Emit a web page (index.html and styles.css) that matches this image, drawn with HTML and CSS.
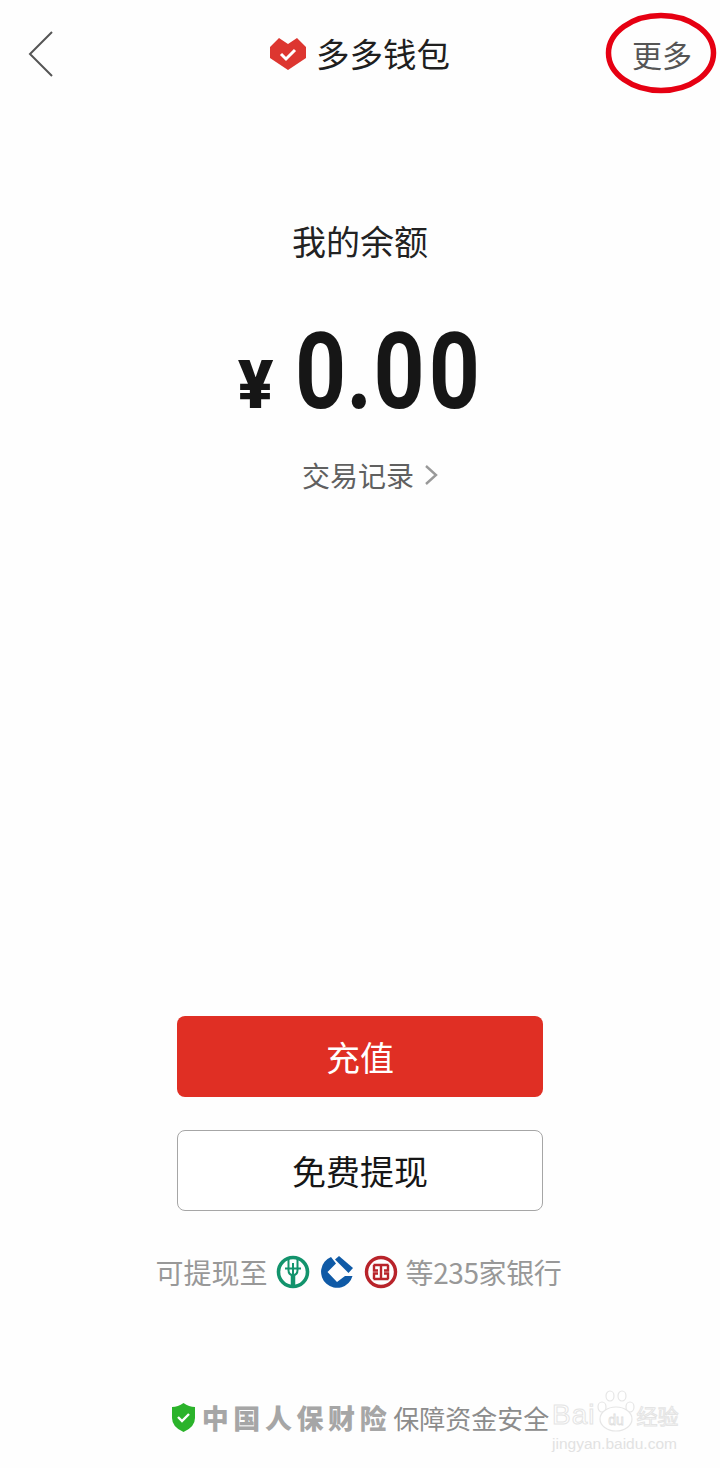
FILE: index.html
```html
<!DOCTYPE html>
<html lang="zh-CN">
<head>
<meta charset="utf-8">
<title>多多钱包</title>
<link rel="stylesheet" href="styles.css">
</head>
<body>
<div class="page">
  <header class="topbar">
    <svg class="back" width="26" height="48" viewBox="0 0 26 48"><path d="M24 2 L2 24 L24 46" fill="none" stroke="#555" stroke-width="2"/></svg>
    <div class="title">
      <svg class="heart" width="37" height="33" viewBox="0 0 37 33"><path d="M0 9 L9 0 L18 6 L27 0 L36 9 V20 L18 32 L0 20 Z" fill="#dd3630"/><path d="M11 16 L16 21 L25 12" fill="none" stroke="#fff" stroke-width="3"/></svg>
      <span class="title-text">多多钱包</span>
    </div>
    <span class="more">更多</span>
    <svg class="mark" width="112" height="82" viewBox="0 0 112 82"><ellipse cx="56" cy="41" rx="52.5" ry="37.5" fill="none" stroke="#e60012" stroke-width="5.500"/></svg>
  </header>

  <main class="balance">
    <div class="label">我的余额</div>
    <div class="amount"><span class="yen">¥</span><span class="num">0<span class="dot">.</span><span class="tail">00</span></span></div>
    <div class="records">
      <span>交易记录</span>
      <svg width="14" height="22" viewBox="0 0 14 22"><path d="M2 2 L12 11 L2 20" fill="none" stroke="#999" stroke-width="2.4"/></svg>
    </div>
  </main>

  <section class="actions">
    <div class="btn primary">充值</div>
    <div class="btn outline">免费提现</div>
    <div class="banks">
      <span>可提现至</span>
      <svg class="bank" width="34" height="34" viewBox="0 0 34 34">
        <circle cx="17" cy="17" r="14.500" fill="none" stroke="#12936c" stroke-width="3.600"/>
        <path d="M17 32 V19" fill="none" stroke="#12936c" stroke-width="4.500"/>
        <path d="M12.500 3 V15 Q12.500 20 17 20 Q21.500 20 21.500 15 V3 M17 8 V19 M9 13.500 H25" fill="none" stroke="#12936c" stroke-width="2"/>
      </svg>
      <svg class="bank" width="34" height="34" viewBox="0 0 34 34">
        <path d="M11 2 A16 16 0 1 0 32.500 21 H25 L17 27 L7.500 17 L16 8.500 Z" fill="#0f5aa6"/>
        <path d="M19 1 L33 13 L28.500 18 L15 4.500 Z" fill="#0f5aa6"/>
      </svg>
      <svg class="bank" width="34" height="34" viewBox="0 0 34 34">
        <circle cx="17" cy="17" r="14.500" fill="none" stroke="#b8232a" stroke-width="3.400"/>
        <path d="M9.500 10 H24.500 M9.500 24 H24.500 M17 10 V24 M10 10 V15.500 H14 M24 10 V15.500 H20 M10 24 V18.500 H14 M24 24 V18.500 H20" fill="none" stroke="#b8232a" stroke-width="2.400"/>
      </svg>
      <span class="banks-count">等235家银行</span>
    </div>
  </section>

  <footer class="assure">
    <svg class="shield" width="25" height="29" viewBox="0 0 25 29"><path d="M12.500 0 Q18 4 24 4 V15 Q24 24 12.500 29 Q1 24 1 15 V4 Q7 4 12.500 0 Z" fill="#2bb32b"/><path d="M7 14 L11 18 L18 11" fill="none" stroke="#fff" stroke-width="2.400"/></svg>
    <span class="insurer">中国人保财险</span>
    <span class="guarantee">保障资金安全</span>
  </footer>

  <div class="watermark">
    <div class="wm-top">
      <span class="wm-bai">Bai</span>
      <svg class="wm-paw" width="38" height="42" viewBox="0 0 38 42"><g fill="#fff" stroke="#e6e6e6" stroke-width="1.200"><ellipse cx="5" cy="17" rx="4" ry="5"/><ellipse cx="13" cy="6" rx="4" ry="5"/><ellipse cx="25" cy="6" rx="4" ry="5"/><ellipse cx="33" cy="17" rx="4" ry="5"/><ellipse cx="19" cy="29" rx="16" ry="12"/></g><text x="19" y="35" text-anchor="middle" class="wm-du">du</text></svg>
      <span class="wm-jy">经验</span>
    </div>
    <div class="wm-url">jingyan.baidu.com</div>
  </div>
</div>
</body>
</html>
```
FILE: styles.css
```css
* { box-sizing: border-box; }
html, body { margin: 0; padding: 0; }
body {
  background: #fff;
  font-family: "Noto Sans CJK SC", "Noto Sans", sans-serif;
}
.page {
  position: relative;
  width: 720px;
  height: 1468px;
  overflow: hidden;
  display: flex;
  flex-direction: column;
  align-items: center;
  background: #fefefe;
}
.topbar {
  position: relative;
  width: 100%;
  height: 108px;
  padding: 0 28px;
  display: grid;
  grid-template-columns: 1fr auto 1fr;
  align-items: center;
}
.back { display: block; justify-self: start; }
.title {
  display: flex;
  align-items: center;
  gap: 9px;
  font-size: 33.500px;
  line-height: 44px;
  color: #1f1f1f;
}
.title-text { margin-top: -2px; }
.more {
  justify-self: end;
  font-size: 30px;
  line-height: 40px;
  color: #555;
}
.mark {
  position: absolute;
  left: 605px;
  top: 12px;
}
.balance {
  display: flex;
  flex-direction: column;
  align-items: center;
  margin-top: 113px;
}
.label {
  font-size: 34px;
  line-height: 40px;
  color: #222;
}
.amount {
  display: flex;
  align-items: baseline;
  gap: 22px;
  margin-top: 52px;
  margin-left: -9px;
  height: 120px;
  color: #161616;
  font-family: Roboto, sans-serif;
  font-weight: 700;
}
.num {
  display: inline-block;
  width: 178px;
  font-size: 105px;
  line-height: 120px;
  white-space: nowrap;
  transform: scaleX(0.85);
  transform-origin: left center;
}
.dot { letter-spacing: 1.500px; }
.tail { letter-spacing: 5px; }
.yen {
  font-size: 66px;
  font-weight: 900;
  line-height: 120px;
}
.records {
  display: flex;
  align-items: center;
  gap: 10px;
  margin-top: 22px;
  margin-left: 20px;
  font-size: 28px;
  line-height: 40px;
  color: #606060;
}
.actions {
  display: flex;
  flex-direction: column;
  align-items: center;
  margin-top: 521px;
}
.btn {
  width: 366px;
  height: 81px;
  display: flex;
  align-items: center;
  justify-content: center;
  border-radius: 8px;
  font-size: 34px;
}
.primary {
  background: #e02f24;
  color: #fff;
}
.outline {
  margin-top: 33px;
  border: 1.500px solid #a6a6a6;
  background: #fff;
  color: #161616;
  font-size: 34px;
}
.banks {
  display: flex;
  align-items: center;
  gap: 8px;
  margin-top: 41px;
  margin-left: -3px;
  height: 40px;
  font-size: 28px;
  color: #989898;
}
.banks-count { letter-spacing: -0.4px; }
.bank + .bank { margin-left: 2px; }
.assure {
  display: flex;
  align-items: center;
  gap: 6px;
  margin-top: 105px;
  height: 40px;
  white-space: nowrap;
}
.shield { flex: none; }
.insurer {
  font-size: 27px;
  font-weight: 900;
  letter-spacing: 4.600px;
  color: #a6a6a6;
}
.guarantee {
  margin-left: -4px;
  font-size: 26px;
  color: #8c8c8c;
}
.watermark {
  position: absolute;
  left: 552px;
  top: 1390px;
  width: 132px;
  font-family: "Liberation Sans", sans-serif;
  color: #fff;
  -webkit-text-stroke: 1px #e4e4e4;
}
.wm-top {
  display: flex;
  align-items: flex-end;
  height: 42px;
  white-space: nowrap;
}
.wm-paw { flex: none; margin: 0 1px 0 2px; }
.wm-du {
  font-size: 14px;
  fill: #fff;
  stroke: #e0e0e0;
  stroke-width: 0.8px;
  font-family: "Liberation Sans", sans-serif;
}
.wm-bai { flex: none; font-size: 28px; line-height: 34px; letter-spacing: 1px; }
.wm-jy {
  flex: none;
  font-family: "Noto Sans CJK SC", sans-serif;
  font-size: 21px;
  line-height: 34px;
}
.wm-url {
  margin-top: 2px;
  font-size: 15.500px;
  line-height: 20px;
  -webkit-text-stroke: 0;
  color: #e2e2e2;
}
```
